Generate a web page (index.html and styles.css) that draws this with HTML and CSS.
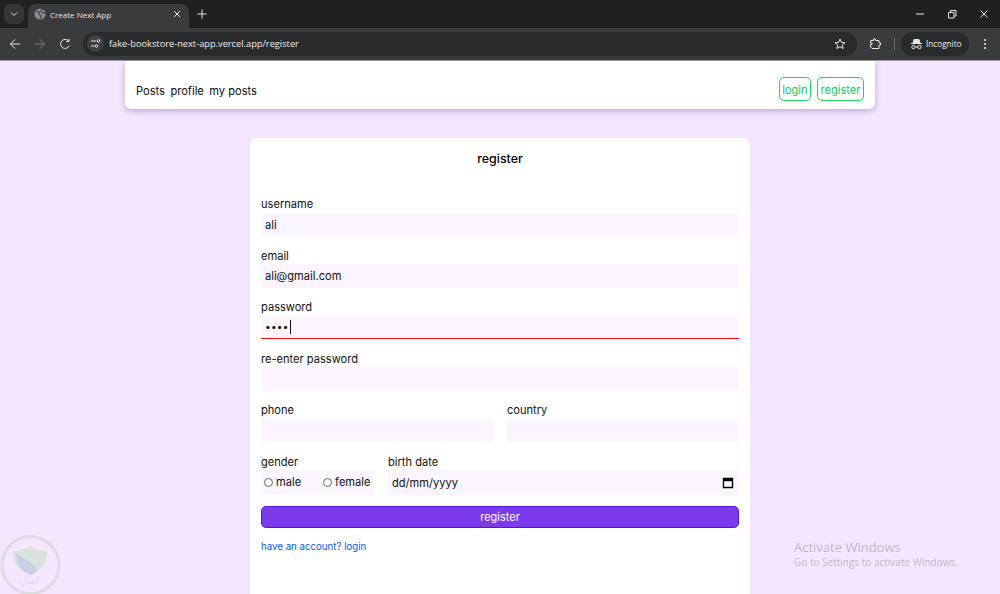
FILE: index.html
```html
<!DOCTYPE html>
<html lang="en">
<head>
<meta charset="utf-8">
<title>Create Next App</title>
<link rel="stylesheet" href="styles.css">
</head>
<body>
<div class="browser">
  <div class="tabstrip">
    <div class="tabsearch"><svg width="10" height="10" viewBox="0 0 10 10"><path d="M2 3.5 5 6.5 8 3.5" class="ic" stroke-width="1.5"/></svg></div>
    <div class="tab">
      <svg class="favicon" width="12" height="12" viewBox="0 0 12 12"><circle cx="6" cy="6" r="5.5" fill="#8a8d91"/><path d="M2 3 5 4 5 6 7 8 6 11M8 1 7 3 9 5 11.5 5" fill="none" stroke="#45474a" stroke-width="1.3"/></svg>
      <span class="tabtitle">Create Next App</span>
      <svg class="tabclose" width="10" height="10" viewBox="0 0 10 10"><path d="M2 2 8 8M8 2 2 8" class="ic" stroke-width="1.3"/></svg>
    </div>
    <svg class="newtab" width="10" height="10" viewBox="0 0 10 10"><path d="M5 .5V9.500M.5 5H9.500" class="ic" stroke-width="1.300"/></svg>
    <div class="winctrls">
      <svg width="10" height="10" viewBox="0 0 10 10"><path d="M1 5H9" class="ic"/></svg>
      <svg width="10" height="10" viewBox="0 0 10 10"><path d="M1.500 3.500H7V9H1.500ZM3.500 3.500V1.500H9V7H7" class="ic"/></svg>
      <svg width="10" height="10" viewBox="0 0 10 10"><path d="M1.500 1.500 8.500 8.500M8.500 1.500 1.500 8.500" class="ic"/></svg>
    </div>
  </div>
  <div class="toolbar">
    <svg class="tb back" width="12" height="12" viewBox="0 0 12 12"><path d="M11 6H1.500M6 1.500 1.500 6 6 10.500" class="ic" stroke-width="1.300"/></svg>
    <svg class="tb fwd" width="12" height="12" viewBox="0 0 12 12"><path d="M1 6H10.500M6 1.500 10.500 6 6 10.500" class="ic dim" stroke-width="1.300"/></svg>
    <svg class="tb reload" width="12" height="12" viewBox="0 0 12 12"><path d="M10.300 7.500A4.500 4.500 0 1 1 9.500 3M10 .8V3.500H7.300" class="ic" stroke-width="1.300"/></svg>
    <div class="omnibox">
      <div class="siteinfo"><svg width="11" height="11" viewBox="0 0 11 11"><path d="M1 3H6M1 8H4" class="ic" stroke-width="1.200"/><circle cx="8.500" cy="3" r="1.300" class="ic"/><circle cx="6.500" cy="8" r="1.300" class="ic"/></svg></div>
      <span class="url">fake-bookstore-next-app.vercel.app/register</span>
      <svg class="star" width="12" height="12" viewBox="0 0 12 12"><path d="M6 1 7.400 4.400 11 4.700 8.300 7 9.100 10.600 6 8.700 2.900 10.600 3.700 7 1 4.700 4.600 4.400Z" class="ic" stroke-width="1.200"/></svg>
    </div>
    <svg class="ext" width="12" height="12" viewBox="0 0 12 12"><path d="M1.500 2.500H4.500V1H6.500V2.500H10V4.800H11.500V7H10V10.500H3L1.500 9V6.500H3V4.800H1.500Z" class="ic" stroke-width="1.200"/></svg>
    <span class="tbsep"></span>
    <div class="incognito">
      <svg width="13" height="12" viewBox="0 0 13 12"><path d="M4 1.500H9L10 5H3ZM1 5.500H12" fill="#e6e6e6" stroke="#e6e6e6"/><circle cx="3.500" cy="9" r="1.700" class="ic"/><circle cx="9.500" cy="9" r="1.700" class="ic"/><path d="M5.200 9H7.800" class="ic"/></svg>
      <span>Incognito</span>
    </div>
    <svg class="menu" width="4" height="12" viewBox="0 0 4 12"><circle cx="2" cy="2" r="1.100" fill="#e6e6e6"/><circle cx="2" cy="6" r="1.100" fill="#e6e6e6"/><circle cx="2" cy="10" r="1.100" fill="#e6e6e6"/></svg>
  </div>
</div>

<main class="page">
  <nav class="navcard">
    <div class="navlinks"><a>Posts</a><a>profile</a><a>my posts</a></div>
    <div class="navbtns"><a class="navbtn">login</a><a class="navbtn">register</a></div>
  </nav>
  <form class="formcard">
    <h1 class="formtitle">register</h1>
    <div class="field"><label>username</label><div class="input">ali</div></div>
    <div class="field"><label>email</label><div class="input">ali@gmail.com</div></div>
    <div class="field"><label>password</label><div class="input active"><span class="dots">••••</span><span class="caret"></span></div></div>
    <div class="field"><label>re-enter password</label><div class="input"></div></div>
    <div class="tworow">
      <div class="field"><label>phone</label><div class="input"></div></div>
      <div class="field"><label>country</label><div class="input"></div></div>
    </div>
    <div class="genderrow">
      <div class="gender">
        <label class="glabel">gender</label>
        <div class="radios">
          <span class="radio"><i class="dot"></i>male</span>
          <span class="radio"><i class="dot"></i>female</span>
        </div>
      </div>
      <div class="birth">
        <label class="blabel">birth date</label>
        <div class="input dateinput"><span>dd/mm/yyyy</span>
          <svg width="12" height="12" viewBox="0 0 12 12"><path d="M1.500 1.500H10.500V10.500H1.500Z" fill="none" stroke="#000" stroke-width="1.400"/><path d="M1.500 3H10.500" stroke="#000" stroke-width="2.400"/></svg>
        </div>
      </div>
    </div>
    <button class="submit" type="button">register</button>
    <a class="haveacc">have an account? login</a>
  </form>
</main>

<div class="activate">
  <div class="act1">Activate Windows</div>
  <div class="act2">Go to Settings to activate Windows.</div>
</div>
<svg class="wmark" width="64" height="61" viewBox="0 0 64 61">
  <circle cx="30.500" cy="32" r="28.500" fill="none" stroke="#dedce2" stroke-width="3"/>
  <path d="M30 13 C24 17 18 18 13 18 C12 30 18 37 30 42 C42 37 48 30 47 18 C42 18 36 17 30 13Z" fill="#d9e2df"/>
  <path d="M17 20 C22 27 29 26 35 34 L37 38 C34 41 31 42 29 41 C20 37 15 30 17 20Z" fill="#c9d0e6"/>
  <text x="30" y="51" class="wmtext" text-anchor="middle">كفيل</text>
</svg>
</body>
</html>
```
FILE: styles.css
```css
* { box-sizing: border-box; }
html, body { margin: 0; height: 100%; overflow: hidden; }
body {
  background: #f3e6fe;
  font-family: Inter, "Liberation Sans", sans-serif;
  font-size: 11.100px;
  color: #111;
}
.ic { fill: none; stroke: #e6e6e6; stroke-width: 1; }
.ic.dim { stroke: #7b7c7e; }

.browser { height: 61px; border-bottom: 1px solid #9a9a9c; display: flex; flex-direction: column; }
.tabstrip { height: 28px; background: #1f2020; display: flex; align-items: flex-end; position: relative; padding-left: 4px; }
.tabsearch { width: 20px; height: 20px; margin: 0 4px 4px 0; border-radius: 6px; background: #333537; display: flex; align-items: center; justify-content: center; }
.tab { width: 161px; height: 24px; background: #3a3b3d; border-radius: 8px 8px 0 0; display: flex; align-items: center; padding: 0 7px 4px 6px; }
.favicon { margin-right: 4px; flex: none; }
.tabtitle { font: 8px "Open Sans", "Liberation Sans", sans-serif; color: #e4e4e4; flex: 1; }
.newtab { margin: 0 0 9px 8px; }
.winctrls { margin-left: auto; display: flex; gap: 22px; padding: 0 11px 9px 0; align-self: flex-end; }
.winctrls svg { display: block; }
.toolbar { height: 32px; background: #3a3b3d; display: flex; align-items: center; padding: 0 13px 1px 9px; }
.tb { flex: none; }
.fwd { margin-left: 13px; }
.reload { margin-left: 13px; }
.omnibox { flex: 1; height: 24px; margin-left: 12px; border-radius: 12px; background: #292a2c; display: flex; align-items: center; padding: 0 11px 0 4px; }
.siteinfo { width: 17px; height: 17px; border-radius: 50%; background: #3f4042; display: flex; align-items: center; justify-content: center; }
.url { margin-left: 5px; font: 9.260px "Open Sans", "Liberation Sans", sans-serif; color: #eee; flex: 1; }
.ext { margin-left: 12px; flex: none; }
.tbsep { width: 1px; height: 12px; background: #6a6b6d; margin: 0 6px 0 13px; }
.incognito { width: 68px; height: 24px; border-radius: 12px; background: #292a2c; display: flex; align-items: center; gap: 3px; padding-left: 9px; font: 8.200px "Open Sans", "Liberation Sans", sans-serif; color: #eee; }
.menu { margin-left: 14px; flex: none; }

.page { display: flex; flex-direction: column; align-items: center; }
.navcard {
  width: 750px; height: 48px; background: #fff; border-radius: 0 0 6px 6px;
  box-shadow: 0 2px 6px rgba(40, 10, 90, .28);
  display: flex; align-items: flex-end; justify-content: space-between;
  padding: 0 11px 8px 11px;
}
.navlinks { display: flex; gap: 5.500px; padding-bottom: 2px; line-height: 16px; color: #0b0b0b; }
.navbtns { display: flex; gap: 6px; }
.navbtn { height: 24px; line-height: 24px; padding: 0 2.500px; border: 1px solid #22d160; border-radius: 5px; color: #22c96a; }
.formcard { width: 500px; height: 480px; margin-top: 29px; background: #fff; border-radius: 8px 8px 0 0; padding: 0 11px; flex: none; }
.formtitle { margin: 0; padding-top: 12px; height: 58px; text-align: center; font-size: 12.400px; font-weight: 500; line-height: 17px; color: #000; }
.field { display: flex; flex-direction: column; height: 51.500px; }
.field label { line-height: 17px; height: 16.500px; color: #111; }
.input { height: 23.500px; background: #faf5ff; padding: 1.500px 4px 0; line-height: 23px; color: #111; display: flex; align-items: center; }
.input.active { border-bottom: 1px solid #ef1010; padding-top: 0; }
.dots { font-size: 10px; letter-spacing: .3px; }
.caret { width: 1px; height: 14px; background: #111; margin-left: 1px; }
.tworow { display: grid; grid-template-columns: 232px 232px; gap: 14px; }
.genderrow { display: flex; gap: 14px; }
.gender { width: 113px; }
.glabel { display: block; line-height: 17px; height: 16.500px; }
.radios { height: 24px; background: #faf5ff; display: flex; align-items: center; gap: 22px; padding-left: 3px; white-space: nowrap; }
.radio { display: flex; align-items: center; gap: 3px; }
.dot { width: 9px; height: 9px; border: 1px solid #666; border-radius: 50%; background: #fff; display: block; }
.birth { flex: 1; }
.blabel { display: block; line-height: 17px; height: 16px; }
.dateinput { height: 25px; justify-content: space-between; padding: 2px 5px 0 4px; }
.submit {
  display: block; width: 100%; height: 22px; margin-top: 11px;
  background: #7c3aed; border: 1px solid #5b10e0; border-radius: 5px;
  color: #fff; font: 11px Inter, "Liberation Sans", sans-serif; padding: 1px 0 0;
}
.haveacc { display: block; margin-top: 12px; color: #0b5bf0; font-size: 9.700px; line-height: 14px; }

.activate { position: fixed; left: 794px; top: 539px; color: #bfb6c8; font-family: "Open Sans", "Liberation Sans", sans-serif; }
.act1 { font-size: 13px; line-height: 16px; }
.act2 { font-size: 10px; line-height: 15px; }
.wmark { position: fixed; left: 0; top: 533px; }
.wmtext { font: 10px "Noto Sans", "DejaVu Sans", sans-serif; fill: #d9dde4; }
```
